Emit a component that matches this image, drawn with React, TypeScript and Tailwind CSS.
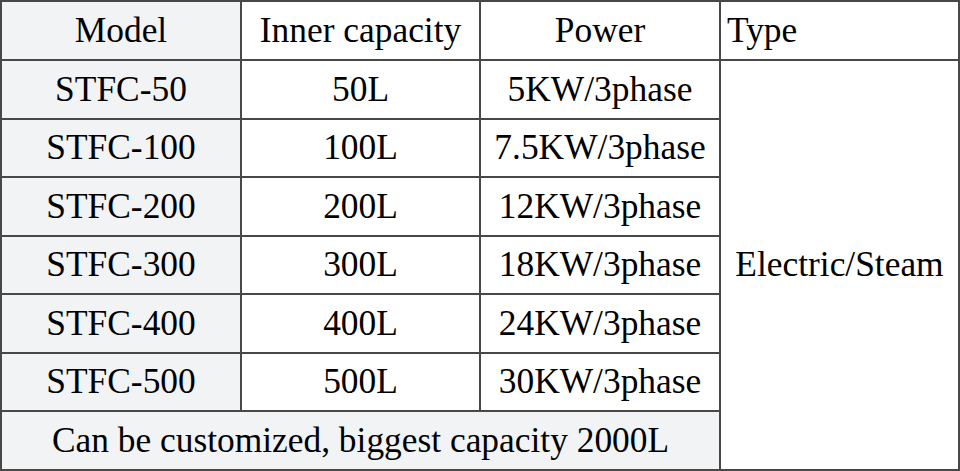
const rows = [
  ['STFC-50', '50L', '5KW/3phase'],
  ['STFC-100', '100L', '7.5KW/3phase'],
  ['STFC-200', '200L', '12KW/3phase'],
  ['STFC-300', '300L', '18KW/3phase'],
  ['STFC-400', '400L', '24KW/3phase'],
  ['STFC-500', '500L', '30KW/3phase'],
];

const cell = 'border-2 border-[#484848] text-center align-middle p-0 whitespace-nowrap';

export default function App() {
  return (
    <div className="w-[960px] h-[471px] bg-white overflow-hidden font-['Liberation_Serif','Times_New_Roman',serif]">
      <table className="table-fixed border-collapse w-[958px] h-[469px] border-2 border-[#1a1a1a] text-[35.4px] leading-none text-black font-['Liberation_Serif','Times_New_Roman',serif]">
        <colgroup>
          <col className="w-[240px]" />
          <col className="w-[239px]" />
          <col className="w-[240px]" />
          <col className="w-[239px]" />
        </colgroup>
        <tbody>
          <tr className="h-[59px]">
            <td className={`${cell} bg-[#f2f3f5]`}>Model</td>
            <td className={`${cell} bg-white`}>Inner capacity</td>
            <td className={`${cell} bg-white`}>Power</td>
            <td className={`${cell} bg-white text-left pl-[6px]`}>Type</td>
          </tr>
          {rows.map((r, i) => (
            <tr key={r[0]} className="h-[58.5px]">
              <td className={`${cell} bg-[#f2f3f5]`}>{r[0]}</td>
              <td className={`${cell} bg-white`}>{r[1]}</td>
              <td className={`${cell} bg-white`}>{r[2]}</td>
              {i === 0 && (
                <td rowSpan={7} className={`${cell} bg-white`}>
                  Electric/Steam
                </td>
              )}
            </tr>
          ))}
          <tr className="h-[59px]">
            <td colSpan={3} className={`${cell} bg-[#f2f3f5]`}>
              Can be customized, biggest capacity 2000L
            </td>
          </tr>
        </tbody>
      </table>
    </div>
  );
}
